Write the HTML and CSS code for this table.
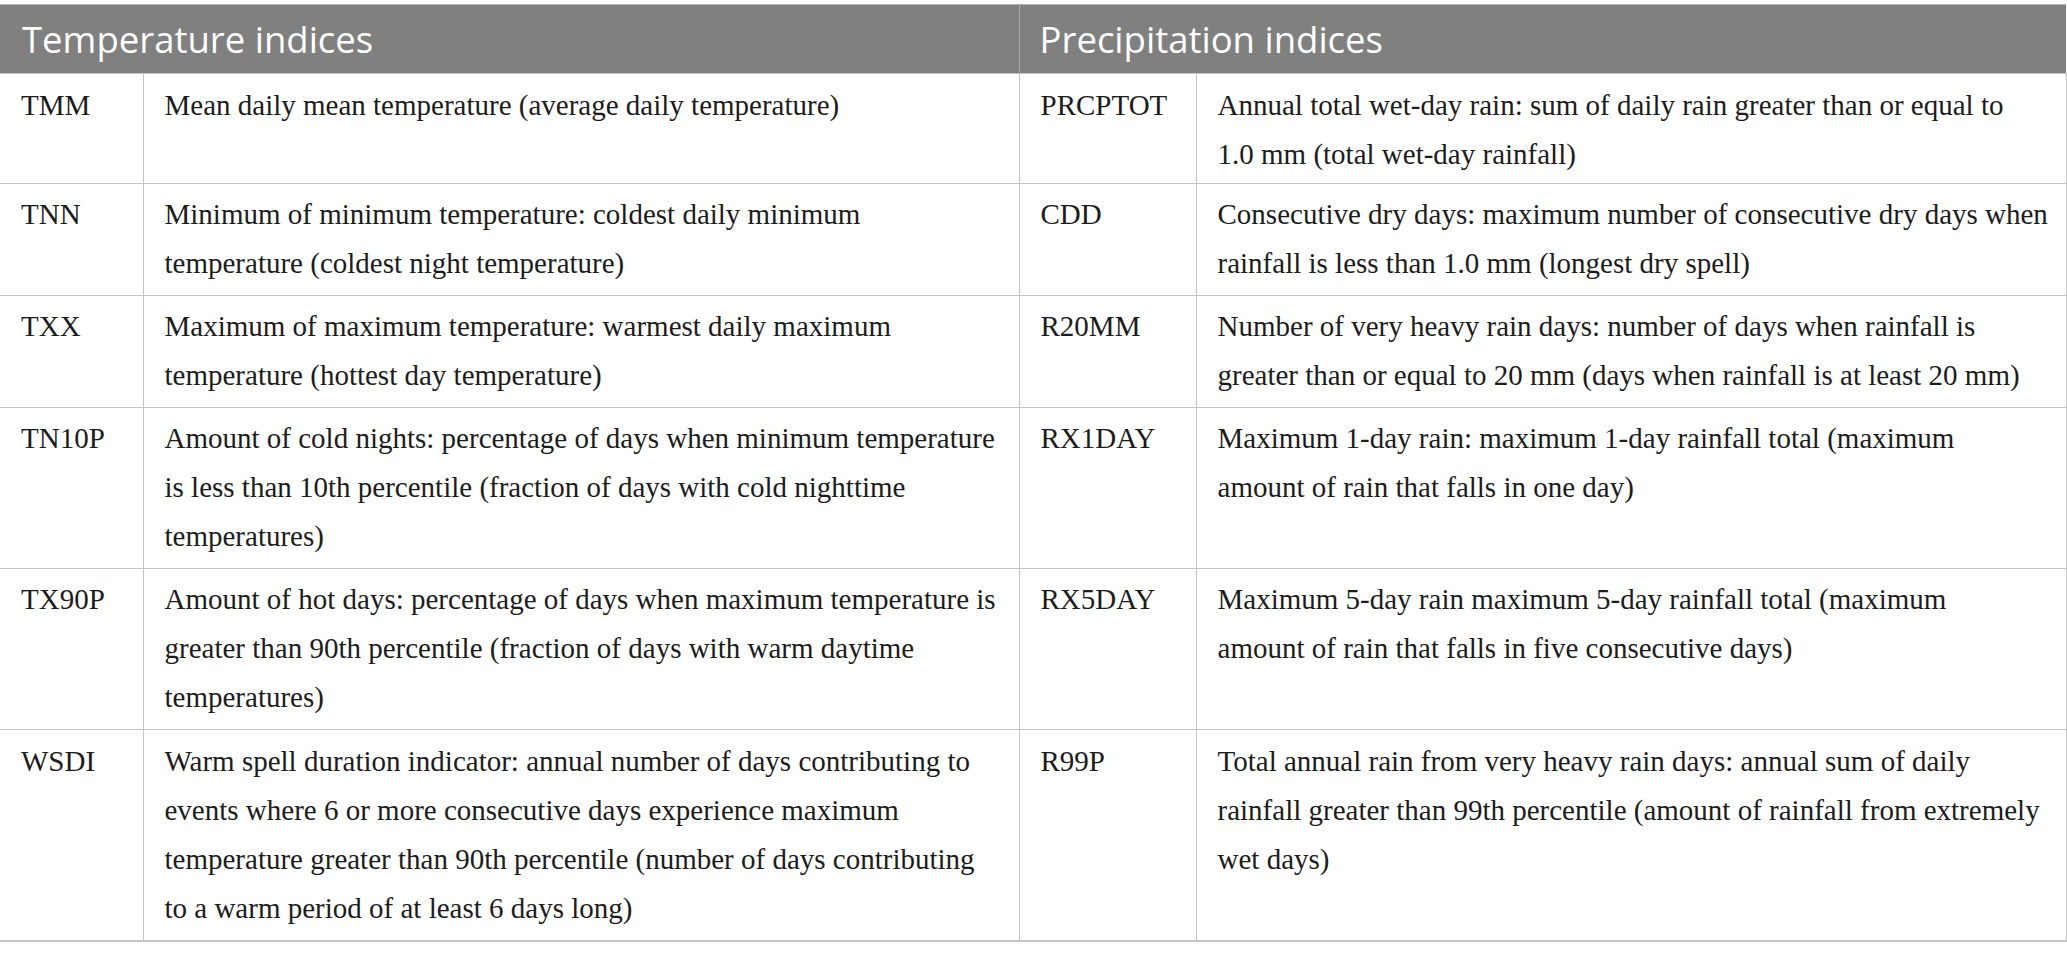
FILE: index.html
```html
<!DOCTYPE html>
<html lang="en">
<head>
<meta charset="utf-8">
<title>Climate indices</title>
<link rel="stylesheet" href="styles.css">
</head>
<body>
<table class="indices">
  <colgroup>
    <col class="c-code1">
    <col class="c-desc1">
    <col class="c-code2">
    <col class="c-desc2">
  </colgroup>
  <thead>
    <tr>
      <th colspan="2" class="h-first">Temperature indices</th>
      <th colspan="2" class="h-second">Precipitation indices</th>
    </tr>
  </thead>
  <tbody>
    <tr class="first">
      <td>TMM</td>
      <td>Mean daily mean temperature (average daily temperature)</td>
      <td>PRCPTOT</td>
      <td>Annual total wet-day rain: sum of daily rain greater than or equal to<br>1.0 mm (total wet-day rainfall)</td>
    </tr>
    <tr>
      <td>TNN</td>
      <td>Minimum of minimum temperature: coldest daily minimum<br>temperature (coldest night temperature)</td>
      <td>CDD</td>
      <td>Consecutive dry days: maximum number of consecutive dry days when<br>rainfall is less than 1.0 mm (longest dry spell)</td>
    </tr>
    <tr>
      <td>TXX</td>
      <td>Maximum of maximum temperature: warmest daily maximum<br>temperature (hottest day temperature)</td>
      <td>R20MM</td>
      <td>Number of very heavy rain days: number of days when rainfall is<br>greater than or equal to 20 mm (days when rainfall is at least 20 mm)</td>
    </tr>
    <tr>
      <td>TN10P</td>
      <td>Amount of cold nights: percentage of days when minimum temperature<br>is less than 10th percentile (fraction of days with cold nighttime<br>temperatures)</td>
      <td>RX1DAY</td>
      <td>Maximum 1-day rain: maximum 1-day rainfall total (maximum<br>amount of rain that falls in one day)</td>
    </tr>
    <tr>
      <td>TX90P</td>
      <td>Amount of hot days: percentage of days when maximum temperature is<br>greater than 90th percentile (fraction of days with warm daytime<br>temperatures)</td>
      <td>RX5DAY</td>
      <td>Maximum 5-day rain maximum 5-day rainfall total (maximum<br>amount of rain that falls in five consecutive days)</td>
    </tr>
    <tr class="last">
      <td>WSDI</td>
      <td>Warm spell duration indicator: annual number of days contributing to<br>events where 6 or more consecutive days experience maximum<br>temperature greater than 90th percentile (number of days contributing<br>to a warm period of at least 6 days long)</td>
      <td>R99P</td>
      <td>Total annual rain from very heavy rain days: annual sum of daily<br>rainfall greater than 99th percentile (amount of rainfall from extremely<br>wet days)</td>
    </tr>
  </tbody>
</table>
</body>
</html>
```
FILE: styles.css
```css
html, body {
  margin: 0;
  padding: 0;
  background: #ffffff;
}

body {
  padding-top: 4px;
}

.indices {
  border-collapse: collapse;
  table-layout: fixed;
  width: 2066px;
  font-family: "Liberation Serif", "Times New Roman", serif;
  color: #1c1c1c;
  border-top: 1px solid #b4b4b4;
  border-bottom: 2px solid #c4c4c4;
}

.c-code1 { width: 143px; }
.c-desc1 { width: 876px; }
.c-code2 { width: 177px; }
.c-desc2 { width: 870px; }

.indices th {
  background: #808080;
  color: #ffffff;
  font-family: "Open Sans", "Noto Sans", sans-serif;
  font-weight: 400;
  font-size: 36.5px;
  text-align: left;
  height: 68px;
  line-height: 49px;
  padding: 10px 10px 9px 22px;
  box-sizing: border-box;
  vertical-align: middle;
  white-space: nowrap;
}

.indices th.h-second {
  padding-left: 20px;
  border-left: 1px solid #a8a8a8;
}

.indices td {
  font-size: 29px;
  line-height: 49px;
  padding: 6px 8px 7px 21px;
  vertical-align: top;
  border-top: 1px solid #c4c4c4;
  border-left: 1px solid #c4c4c4;
  white-space: nowrap;
}

.indices tr.first td {
  padding-top: 7px;
  padding-bottom: 4px;
}

.indices td:first-child {
  border-left: none;
}

.indices td:last-child {
  border-right: 1px solid #c4c4c4;
}

.indices tr.last td {
  padding-top: 7px;
  padding-bottom: 7px;
}
```
